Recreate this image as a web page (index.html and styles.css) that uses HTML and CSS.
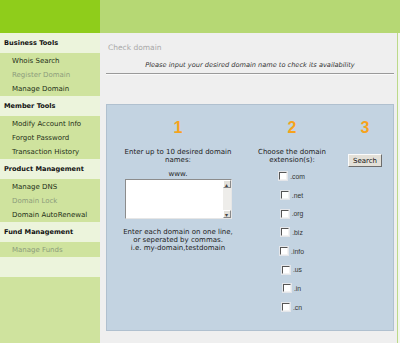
FILE: index.html
```html
<!DOCTYPE html>
<html lang="en">

<head>
    <meta charset="UTF-8">
    <title>Check domain</title>
    <link rel="stylesheet" href="styles.css">
</head>

<body>
    <div class="header">
        <div class="header-logo"></div>
        <div class="header-bar"></div>
    </div>
    <div class="page">
        <div class="sidebar">
            <div class="side-title">Business Tools</div>
            <div class="side-group">
                <a class="side-link">Whois Search</a>
                <a class="side-link disabled">Register Domain</a>
                <a class="side-link">Manage Domain</a>
            </div>
            <div class="side-title">Member Tools</div>
            <div class="side-group">
                <a class="side-link">Modify Account Info</a>
                <a class="side-link">Forgot Password</a>
                <a class="side-link">Transaction History</a>
            </div>
            <div class="side-title">Product Management</div>
            <div class="side-group">
                <a class="side-link">Manage DNS</a>
                <a class="side-link disabled">Domain Lock</a>
                <a class="side-link">Domain AutoRenewal</a>
            </div>
            <div class="side-title">Fund Management</div>
            <div class="side-group">
                <a class="side-link disabled">Manage Funds</a>
            </div>
            <div class="side-title"></div>
        </div>

        <div class="content">
            <div class="crumb">Check domain</div>
            <div class="intro">Please input your desired domain name to check its availability</div>
            <div class="rule"></div>

            <div class="search-box">
                <div class="step">
                    <div class="step-num">1</div>
                    <div class="step-text">Enter up to 10 desired domain<br>names:</div>
                    <div class="www">www.</div>
                    <div class="domains">
                        <textarea class="domains-input"></textarea>
                        <div class="scrollbar">
                            <span class="scroll-btn">&#9652;</span>
                            <span class="scroll-btn">&#9662;</span>
                        </div>
                    </div>
                    <div class="step-note">Enter each domain on one line,<br>or seperated by commas.<br>i.e. my-domain,testdomain</div>
                </div>

                <div class="step">
                    <div class="step-num">2</div>
                    <div class="step-text">Choose the domain<br>extension(s):</div>
                    <div class="ext-list">
                        <label class="ext"><span class="check"></span>.com</label>
                        <label class="ext"><span class="check"></span>.net</label>
                        <label class="ext"><span class="check"></span>.org</label>
                        <label class="ext"><span class="check"></span>.biz</label>
                        <label class="ext"><span class="check"></span>.info</label>
                        <label class="ext"><span class="check"></span>.us</label>
                        <label class="ext"><span class="check"></span>.in</label>
                        <label class="ext"><span class="check"></span>.cn</label>
                    </div>
                </div>

                <div class="step">
                    <div class="step-num">3</div>
                    <button class="search-btn">Search</button>
                </div>
            </div>
        </div>
    </div>
</body>

</html>
```

FILE: styles.css
```css
body {
    margin: 0;
    font-family: "DejaVu Sans", Verdana, sans-serif;
    background-color: #f3f6ee;
    height: 343px;
    display: flex;
    flex-direction: column;
    overflow: hidden;
}

.header {
    display: flex;
    flex-shrink: 0;
    height: 33px;
}

.header-logo {
    width: 100px;
    background-color: #8fcd1b;
}

.header-bar {
    flex: 1;
    background-color: #b6d874;
}

.page {
    flex: 1;
    display: flex;
}

/* sidebar */
.sidebar {
    width: 100px;
    background-color: #cfe39e;
}

.side-title {
    height: 20px;
    line-height: 20px;
    padding-left: 4px;
    background-color: #ecf4dc;
    font-size: 6.6px;
    font-weight: bold;
    color: #111;
}

.side-group {
    padding-top: 1px;
}

.side-link {
    display: block;
    height: 14px;
    line-height: 14px;
    padding-left: 12px;
    font-size: 7px;
    color: #243018;
}

.side-link.disabled {
    color: #8d9c7c;
}

/* content */
.content {
    flex: 1;
    background-color: #efefef;
    border-right: 1px solid #bcd98a;
    margin-right: 2px;
    padding: 10px 3px 0 6px;
}

.crumb {
    padding-left: 2px;
    font-size: 7.5px;
    line-height: 10px;
    color: #a8a8a8;
}

.intro {
    margin-top: 7px;
    font-size: 6.6px;
    line-height: 10px;
    font-style: italic;
    text-align: center;
    color: #333;
}

.rule {
    margin-top: 3px;
    border-top: 1px solid #9a9a9a;
    border-bottom: 1px solid #fafafa;
}

.search-box {
    margin-top: 29px;
    height: 227px;
    box-sizing: border-box;
    background-color: #c3d3e1;
    border: 1px solid #b0c0cf;
    padding: 15px 0 0 13px;
    display: grid;
    grid-template-columns: 116px 112px 34px;
    align-items: start;
}

.step {
    display: flex;
    flex-direction: column;
    align-items: center;
    text-align: center;
}

.step-num {
    font-family: "Liberation Sans", Arial, sans-serif;
    font-size: 16px;
    font-weight: bold;
    line-height: 16px;
    color: #f6a31d;
}

.step-text,
.step-note {
    margin-top: 12px;
    font-size: 7px;
    line-height: 8px;
    color: #222;
    white-space: nowrap;
}

.step-note {
    margin-top: 9px;
}

.www {
    margin-top: 6px;
    font-size: 7px;
    line-height: 8px;
    color: #222;
}

.domains {
    margin-top: 1px;
    width: 107px;
    height: 40px;
    display: flex;
    background-color: #fff;
    border: 1px solid #8c8c8c;
    border-right-color: #e6e6e6;
    border-bottom-color: #e6e6e6;
    box-sizing: border-box;
}

.domains-input {
    flex: 1;
    border: none;
    padding: 0;
    resize: none;
    outline: none;
}

.scrollbar {
    width: 8px;
    display: flex;
    flex-direction: column;
    justify-content: space-between;
    background-color: #eeedea;
}

.scroll-btn {
    height: 8px;
    line-height: 8px;
    font-size: 6px;
    text-align: center;
    color: #444;
    background-color: #e2e0da;
    border: 1px solid;
    border-color: #fff #888 #888 #fff;
    box-sizing: border-box;
}

.ext-list {
    margin-top: 3px;
}

.ext {
    display: flex;
    align-items: center;
    justify-content: center;
    height: 18.7px;
    font-family: "Liberation Sans", Arial, sans-serif;
    font-size: 6.8px;
    color: #333;
}

.check {
    width: 8px;
    height: 8px;
    margin-right: 3px;
    background-color: #fff;
    border: 1px solid;
    border-color: #555 #f2f2f2 #f2f2f2 #555;
    box-shadow: 0 0 0 1px #e4e6ea;
    box-sizing: border-box;
}

.search-btn {
    margin-top: 18px;
    width: 34px;
    height: 13px;
    padding: 0;
    font-family: "DejaVu Sans", Verdana, sans-serif;
    font-size: 7px;
    color: #111;
    background-color: #e3e0d8;
    border: 1px solid;
    border-color: #fbfbfb #6d6d6d #6d6d6d #fbfbfb;
}
```
